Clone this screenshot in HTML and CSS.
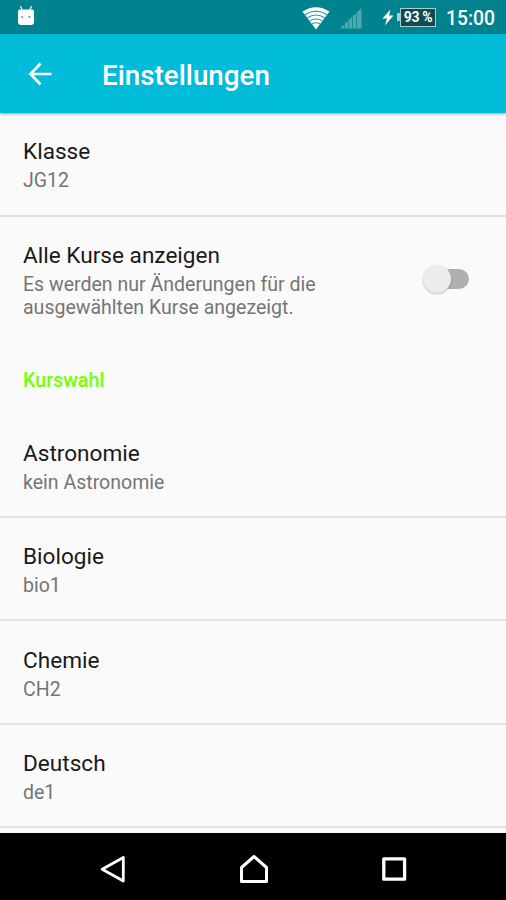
FILE: index.html
```html
<!DOCTYPE html>
<html lang="de">
<head>
    <meta charset="UTF-8">
    <meta name="viewport" content="width=device-width, initial-scale=1.0">
    <title>Einstellungen</title>
    <link rel="stylesheet" href="styles.css">
</head>
<body>

    <!-- Android status bar -->
    <div id="status-bar">
        <svg class="droid-icon" width="18" height="22" viewBox="0 0 18 22">
            <path d="M3.500 1l2 5M14.500 1l-2 5" stroke="#cfe6e8" stroke-width="1.4"/>
            <path d="M3 4.500h12q2 0 2 2v10q0 3.500-3 3.500H4q-3 0-3-3.500v-10q0-2 2-2z" fill="#fff"/>
            <circle cx="5.2" cy="12" r="1.1" fill="#4da8b0"/>
            <circle cx="12.4" cy="12" r="1.1" fill="#4da8b0"/>
        </svg>
        <div class="status-right">
            <svg class="wifi-icon" width="28" height="24" viewBox="0 0 28 24">
                <path d="M0.500 5.500Q14-3 27.500 5.500L14 23.500z" fill="#fff"/>
                <path d="M3 8.700Q14 1.600 25 8.700M5.200 11.800Q14 6.200 22.800 11.800M7.800 14.900Q14 11 20.200 14.900M10 18Q14 15.600 18 18" fill="none" stroke="#2f9aa4" stroke-width="1.1"/>
            </svg>
            <svg class="signal-icon" width="22" height="21" viewBox="0 0 22 21">
                <path d="M0 20.500L21.500 0V20.500z" fill="#4da8b0"/>
                <path d="M4.500 14v7M8.500 10v11M12.500 7v14M16.500 3v18" stroke="#168c97" stroke-width="1"/>
            </svg>
            <svg class="bolt-icon" width="12" height="17" viewBox="0 0 12 17">
                <path d="M8.500 0.500L0.500 9.500H5L3 16.500L11.500 6.500H7z" fill="#fff"/>
            </svg>
            <div class="battery">93 %</div>
            <span class="clock">15:00</span>
        </div>
    </div>

    <!-- App bar -->
    <div id="app-bar">
        <svg class="back-icon" width="24" height="24" viewBox="0 0 24 24">
            <path d="M23.500 12H2.500M12.500 1.500L2.500 12l10 10.500" fill="none" stroke="#fff" stroke-width="2.700"/>
        </svg>
        <h1>Einstellungen</h1>
    </div>

    <!-- Preference list -->
    <div id="settings">
        <div class="pref">
            <div class="pref-title">Klasse</div>
            <div class="pref-summary">JG12</div>
        </div>
        <div class="pref pref-switch">
            <div class="pref-text">
                <div class="pref-title">Alle Kurse anzeigen</div>
                <div class="pref-summary">Es werden nur Änderungen für die<br>ausgewählten Kurse angezeigt.</div>
            </div>
            <div class="switch"></div>
        </div>
        <div class="category">Kurswahl</div>
        <div class="pref">
            <div class="pref-title">Astronomie</div>
            <div class="pref-summary">kein Astronomie</div>
        </div>
        <div class="pref">
            <div class="pref-title">Biologie</div>
            <div class="pref-summary">bio1</div>
        </div>
        <div class="pref">
            <div class="pref-title">Chemie</div>
            <div class="pref-summary">CH2</div>
        </div>
        <div class="pref">
            <div class="pref-title">Deutsch</div>
            <div class="pref-summary">de1</div>
        </div>
    </div>

    <!-- Navigation buttons -->
    <div id="nav-bar">
        <svg width="28" height="30" viewBox="0 0 28 30">
            <path d="M24.300 3.500v23.500L3.200 15.200z" fill="none" stroke="#fff" stroke-width="2.800" stroke-linejoin="round"/>
        </svg>
        <svg width="30" height="30" viewBox="0 0 30 30">
            <path d="M15 2.500L27.500 13.500V27.500H2.500V13.500z" fill="none" stroke="#fff" stroke-width="3" stroke-linejoin="round"/>
        </svg>
        <svg width="26" height="26" viewBox="0 0 26 26">
            <rect x="2.800" y="2.800" width="20.800" height="20.400" fill="none" stroke="#fff" stroke-width="3.300" stroke-linejoin="round"/>
        </svg>
    </div>

</body>
</html>
```
FILE: styles.css
```css
/* General reset */
* {
    margin: 0;
    padding: 0;
    box-sizing: border-box;
}

/* Theme colors */
:root {
    --primary: #00bcd8;
    --primary-dark: #00838f;
    --accent: #76ff03;
    --background: #fafafa;
    --text: #1a1a1a;
    --text-secondary: #757575;
    --divider: #e2e2e2;
}

body {
    display: flex;
    flex-direction: column;
    height: 900px;
    overflow: hidden;
    font-family: Roboto, sans-serif;
    background-color: var(--background);
    color: var(--text);
}

/* Status bar */
#status-bar {
    display: flex;
    flex: none;
    justify-content: space-between;
    height: 34px;
    padding: 0 11px 0 17px;
    background-color: var(--primary-dark);
    color: #fff;
}

.droid-icon {
    margin-top: 5px;
}

.status-right {
    display: flex;
    align-items: center;
}

.wifi-icon {
    margin-top: 2px;
}

.signal-icon {
    margin: 3px 20px 0 10px;
}

.bolt-icon {
    margin-right: 6px;
}

.battery {
    position: relative;
    width: 36px;
    height: 19px;
    border: 1.5px solid #a5d0d4;
    background-color: #114b52;
    font-size: 14px;
    font-weight: 700;
    line-height: 17px;
    text-align: center;
    white-space: nowrap;
    letter-spacing: -0.3px;
}

/* Battery tip */
.battery::before {
    content: "";
    position: absolute;
    left: -4px;
    top: 4px;
    width: 3px;
    height: 8px;
    background-color: #a5d0d4;
}

.clock {
    margin: 2px 0 0 10px;
    font-size: 19.3px;
    font-weight: 500;
}

/* App bar */
#app-bar {
    display: flex;
    flex: none;
    align-items: center;
    height: 79px;
    padding-left: 28px;
    background-color: var(--primary);
    color: #fff;
    box-shadow: 0 1px 3px rgba(0, 0, 0, 0.35);
    z-index: 1;
}

#app-bar h1 {
    margin: 3px 0 0 50px;
    font-size: 27.8px;
    font-weight: 500;
}

/* Preferences */
#settings {
    flex: 1;
    overflow: hidden;
}

.pref {
    height: 103.4px;
    padding: 25.4px 23px 0;
    border-bottom: 2px solid var(--divider);
}

.pref:first-child {
    height: 104px;
    padding-top: 25px;
}

.pref-title {
    font-size: 22.6px;
    line-height: 28px;
}

.pref-summary {
    font-size: 19.55px;
    line-height: 23px;
    padding-top: 3px;
    color: var(--text-secondary);
}

.pref-switch {
    display: flex;
    justify-content: space-between;
    height: 126.4px;
    padding-top: 25px;
    padding-right: 37px;
    border-bottom: none;
}

.category {
    height: 71px;
    padding: 25px 23px 0;
    font-size: 19.7px;
    font-weight: 500;
    line-height: 26px;
    color: var(--accent);
}

/* Switch in off position */
.switch {
    position: relative;
    width: 42px;
    height: 20px;
    margin-top: 27px;
    border-radius: 10px;
    background-color: #b0b0b0;
}

.switch::before {
    content: "";
    position: absolute;
    left: -4px;
    top: -4px;
    width: 28px;
    height: 28px;
    border-radius: 50%;
    background-color: #ececec;
    box-shadow: 0 1px 2px rgba(0, 0, 0, 0.25);
}

/* Navigation bar */
#nav-bar {
    display: flex;
    flex: none;
    align-items: center;
    justify-content: space-between;
    height: 67px;
    padding: 4px 99px 0;
    background-color: #000;
}
```
